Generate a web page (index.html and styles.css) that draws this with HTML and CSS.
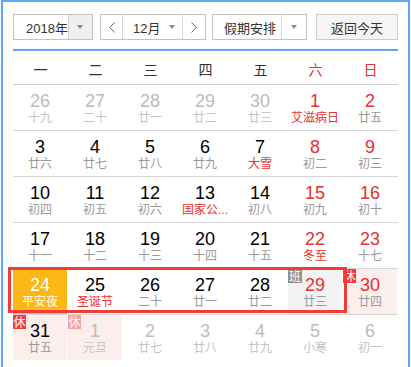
FILE: index.html
```html
<!DOCTYPE html>
<html lang="zh-CN">
<head>
<meta charset="utf-8">
<title>万年历</title>
<link rel="stylesheet" href="styles.css">
</head>
<body>
<div class="cal">
  <div class="toolbar">
    <div class="sel year">
      <span class="sel-text">2018年</span>
      <span class="sel-arrow"><i class="tri"></i></span>
    </div>
    <div class="month-group">
      <span class="nav prev"><svg width="6" height="11" viewBox="0 0 6 11"><polyline points="5.5,0.5 0.8,5.5 5.5,10.5" fill="none" stroke="#666" stroke-width="1"/></svg></span>
      <span class="month-field">12月<i class="tri"></i></span>
      <span class="nav next"><svg width="6" height="11" viewBox="0 0 6 11"><polyline points="0.5,0.5 5.2,5.5 0.5,10.5" fill="none" stroke="#666" stroke-width="1"/></svg></span>
    </div>
    <div class="sel holiday">
      <span class="sel-text">假期安排</span>
      <span class="sel-arrow"><i class="tri"></i></span>
    </div>
    <button class="today-btn">返回今天</button>
  </div>

  <div class="week-head">
    <span>一</span><span>二</span><span>三</span><span>四</span><span>五</span><span class="we">六</span><span class="we">日</span>
  </div>

  <div class="grid">
    <div class="row">
      <div class="day o"><span class="num">26</span><span class="lunar">十九</span></div>
      <div class="day o"><span class="num">27</span><span class="lunar">二十</span></div>
      <div class="day o"><span class="num">28</span><span class="lunar">廿一</span></div>
      <div class="day o"><span class="num">29</span><span class="lunar">廿二</span></div>
      <div class="day o"><span class="num">30</span><span class="lunar">廿三</span></div>
      <div class="day w"><span class="num">1</span><span class="lunar f">艾滋病日</span></div>
      <div class="day w"><span class="num">2</span><span class="lunar">廿五</span></div>
    </div>
    <div class="row">
      <div class="day"><span class="num">3</span><span class="lunar">廿六</span></div>
      <div class="day"><span class="num">4</span><span class="lunar">廿七</span></div>
      <div class="day"><span class="num">5</span><span class="lunar">廿八</span></div>
      <div class="day"><span class="num">6</span><span class="lunar">廿九</span></div>
      <div class="day"><span class="num">7</span><span class="lunar f">大雪</span></div>
      <div class="day w"><span class="num">8</span><span class="lunar">初二</span></div>
      <div class="day w"><span class="num">9</span><span class="lunar">初三</span></div>
    </div>
    <div class="row">
      <div class="day"><span class="num">10</span><span class="lunar">初四</span></div>
      <div class="day"><span class="num">11</span><span class="lunar">初五</span></div>
      <div class="day"><span class="num">12</span><span class="lunar">初六</span></div>
      <div class="day"><span class="num">13</span><span class="lunar f">国家公...</span></div>
      <div class="day"><span class="num">14</span><span class="lunar">初八</span></div>
      <div class="day w"><span class="num">15</span><span class="lunar">初九</span></div>
      <div class="day w"><span class="num">16</span><span class="lunar">初十</span></div>
    </div>
    <div class="row">
      <div class="day"><span class="num">17</span><span class="lunar">十一</span></div>
      <div class="day"><span class="num">18</span><span class="lunar">十二</span></div>
      <div class="day"><span class="num">19</span><span class="lunar">十三</span></div>
      <div class="day"><span class="num">20</span><span class="lunar">十四</span></div>
      <div class="day"><span class="num">21</span><span class="lunar">十五</span></div>
      <div class="day w"><span class="num">22</span><span class="lunar f">冬至</span></div>
      <div class="day w"><span class="num">23</span><span class="lunar">十七</span></div>
    </div>
    <div class="row">
      <div class="day today"><span class="num">24</span><span class="lunar">平安夜</span></div>
      <div class="day"><span class="num">25</span><span class="lunar f">圣诞节</span></div>
      <div class="day"><span class="num">26</span><span class="lunar">二十</span></div>
      <div class="day"><span class="num">27</span><span class="lunar">廿一</span></div>
      <div class="day"><span class="num">28</span><span class="lunar">廿二</span></div>
      <div class="day w work"><span class="badge ban">班</span><span class="num">29</span><span class="lunar">廿三</span></div>
      <div class="day w rest"><span class="badge">休</span><span class="num">30</span><span class="lunar">廿四</span></div>
      <div class="frame"></div>
    </div>
    <div class="row">
      <div class="day rest"><span class="badge">休</span><span class="num">31</span><span class="lunar">廿五</span></div>
      <div class="day o rest"><span class="badge">休</span><span class="num">1</span><span class="lunar">元旦</span></div>
      <div class="day o"><span class="num">2</span><span class="lunar">廿七</span></div>
      <div class="day o"><span class="num">3</span><span class="lunar">廿八</span></div>
      <div class="day o"><span class="num">4</span><span class="lunar">廿九</span></div>
      <div class="day o"><span class="num">5</span><span class="lunar">小寒</span></div>
      <div class="day o"><span class="num">6</span><span class="lunar">初一</span></div>
    </div>
  </div>
</div>
</body>
</html>
```

FILE: styles.css
```css
* { box-sizing: border-box; }

body {
  margin: 0;
  background: #fff;
  font-family: "Liberation Sans", "Noto Sans CJK SC", sans-serif;
}

.cal {
  margin-left: 1px;
  width: 409px;
  border: 2px solid #5ea8f3;
  padding: 0 10px 20px;
}

.toolbar {
  display: flex;
  align-items: center;
  padding: 12px 0 9px;
  border-bottom: 2px solid #5ea8f3;
}

.sel {
  display: flex;
  height: 26px;
  border: 1px solid #c2c2c2;
  font-size: 13px;
  color: #333;
}

.year { width: 80px; }

.holiday { width: 95px; margin-left: 6px; }

.sel-text {
  flex: 1;
  display: flex;
  align-items: center;
  padding-left: 11px;
  white-space: nowrap;
}

.year .sel-text { padding-left: 12px; }

.sel-arrow {
  width: 25px;
  display: flex;
  align-items: center;
  justify-content: center;
  border-left: 1px solid #d6d6d6;
}

.year .sel-arrow { background: #efefef; }

.tri {
  display: block;
  width: 0;
  height: 0;
  border-left: 3.5px solid transparent;
  border-right: 3.5px solid transparent;
  border-top: 4px solid #8a8a8a;
}

.month-group {
  margin-left: 7px;
  width: 106px;
  height: 26px;
  display: flex;
  border: 1px solid #c2c2c2;
  font-size: 13px;
  color: #333;
}

.nav {
  display: flex;
  align-items: center;
  justify-content: center;
}

.prev { width: 22px; border-right: 1px solid #d6d6d6; }
.next { width: 23px; border-left: 1px solid #d6d6d6; }

.month-field {
  flex: 1;
  display: flex;
  align-items: center;
  gap: 9px;
  padding-left: 10px;
  white-space: nowrap;
}

.today-btn {
  margin-left: 9px;
  width: 82px;
  height: 26px;
  padding: 0;
  border: 1px solid #cccccc;
  background: #f5f5f5;
  color: #333;
  font: 13px "Liberation Sans", "Noto Sans CJK SC", sans-serif;
}

.week-head {
  display: grid;
  grid-template-columns: repeat(7, 55px);
  height: 34px;
  padding-top: 3px;
  line-height: 30px;
  border-bottom: 1px solid #d0d0d0;
  text-align: center;
  font-size: 14px;
  color: #333;
  font-family: "Noto Sans CJK SC", sans-serif;
}

.week-head .we { color: #e83030; }

.row {
  position: relative;
  display: grid;
  grid-template-columns: repeat(7, 55px);
  height: 46px;
  border-bottom: 1px solid #d6d6d6;
}

.row:last-child { border-bottom-color: transparent; }

.day {
  position: relative;
  height: 45px;
  padding-top: 6px;
  border-right: 1px solid transparent;
  background-clip: padding-box;
  text-align: center;
}

.num {
  display: block;
  font-size: 18px;
  line-height: 20px;
  color: #000;
}

.lunar {
  display: block;
  font-size: 12px;
  line-height: 14px;
  color: #999;
  white-space: nowrap;
}

.w .num { color: #e83030; }
.lunar.f { color: #e83030; }

.o .num { color: #bbbbbb; }
.o .lunar { color: #c4c4c4; }

.today { background-color: #fcb814; }
.today .num, .today .lunar { color: #fff; }

.work { background-color: #f3f3f3; }
.rest { background-color: #fdeeee; }

.badge {
  position: absolute;
  left: 0;
  top: 0;
  width: 13px;
  height: 14px;
  font-size: 12px;
  line-height: 14px;
  color: #fff;
  background: #f23c3c;
  text-align: center;
  font-family: "Noto Sans CJK SC", sans-serif;
}

.badge.ban { width: 14px; background: #8f8f8f; }

.o .badge { background: #f7a3a3; }

.frame {
  position: absolute;
  left: -5px;
  top: -2px;
  width: 339px;
  height: 46px;
  border: 3px solid #f23c3c;
  pointer-events: none;
}
```
